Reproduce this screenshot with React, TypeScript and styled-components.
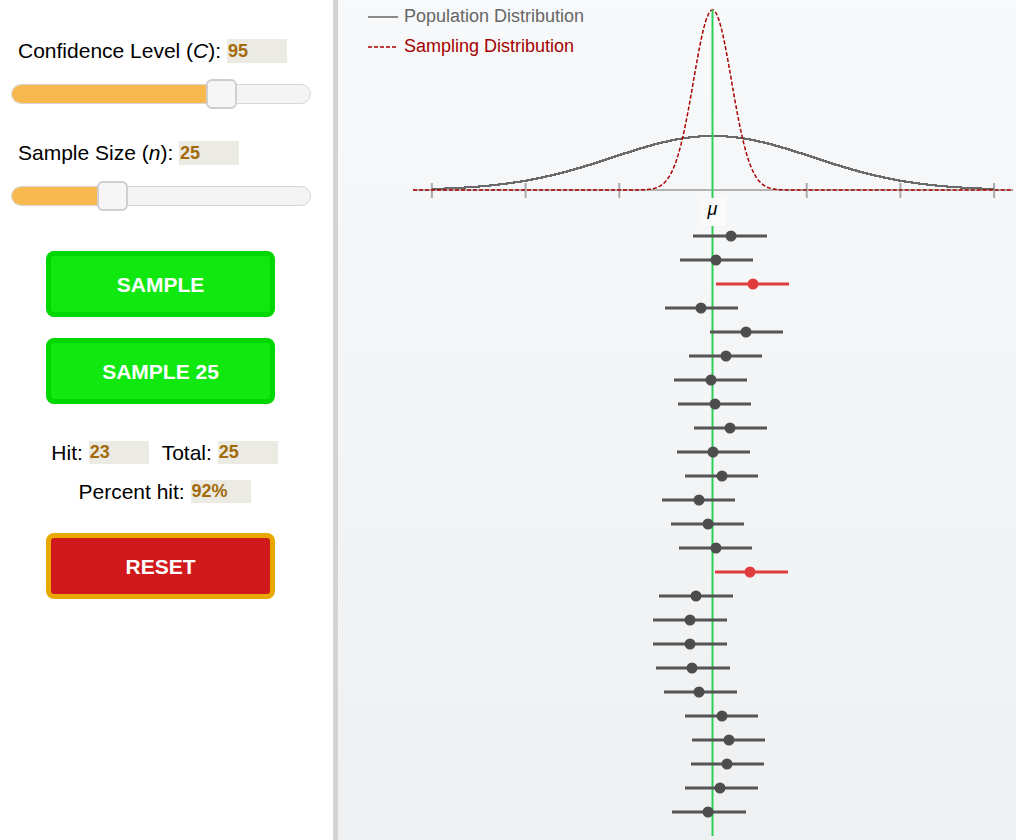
import React from "react";
import styled, { createGlobalStyle } from "styled-components";

const GlobalStyle = createGlobalStyle`
  html, body { margin: 0; padding: 0; }
  body { font-family: "Liberation Sans", Arial, sans-serif; background: #ffffff; }
`;

const Page = styled.div`
  display: flex;
  width: 1016px;
  height: 840px;
  overflow: hidden;
`;

const LeftPanel = styled.div`
  width: 333px;
  flex: none;
  display: flex;
  flex-direction: column;
  background: #ffffff;
  border-right: 5px solid #d3d3d3;
`;

const RightPanel = styled.div`
  flex: 1;
  background: linear-gradient(180deg, #f8f9fb 0%, #eef0f2 100%);
`;

const LabelRow = styled.div<{ $top: number }>`
  display: flex;
  align-items: center;
  margin-top: ${(p) => p.$top}px;
  padding-left: 18px;
  height: 24px;
  font-size: 21px;
  color: #000;
  white-space: pre;
`;

const ValueBox = styled.span<{ $h?: number }>`
  display: inline-block;
  width: 59px;
  height: ${(p) => p.$h ?? 24}px;
  line-height: ${(p) => p.$h ?? 24}px;
  padding-left: 1px;
  background: #ebeae3;
  color: #a36a0c;
  font-weight: bold;
  font-size: 18px;
`;

const SliderWrap = styled.div`
  position: relative;
  margin-left: 11px;
  width: 300px;
  height: 30px;
  display: flex;
  align-items: center;
`;

const Track = styled.div`
  position: relative;
  width: 100%;
  height: 20px;
  box-sizing: border-box;
  border: 1px solid #d6d6d6;
  border-radius: 10px;
  background: #f4f4f4;
  overflow: hidden;
`;

const Fill = styled.div`
  height: 100%;
  background: #f7b84f;
`;

const Thumb = styled.div`
  position: absolute;
  top: 0;
  width: 31px;
  height: 30px;
  box-sizing: border-box;
  border: 2px solid #cfcfcf;
  border-radius: 6px;
  background: #f6f6f6;
`;

const Button = styled.button<{ $top: number; $bg: string; $border: string }>`
  margin-top: ${(p) => p.$top}px;
  margin-left: 46px;
  width: 229px;
  height: 66px;
  box-sizing: border-box;
  border: 5px solid ${(p) => p.$border};
  border-radius: 8px;
  background: ${(p) => p.$bg};
  color: #ffffff;
  font-family: "Liberation Sans", Arial, sans-serif;
  font-weight: bold;
  font-size: 21px;
  padding: 0 0 0 0;
  line-height: 58px;
  cursor: pointer;
`;

const StatsRow = styled.div<{ $top: number }>`
  display: flex;
  justify-content: center;
  align-items: center;
  width: 329px;
  margin-top: ${(p) => p.$top}px;
  height: 23px;
  font-size: 21px;
  white-space: pre;
`;

const Spacer = styled.span`
  display: inline-block;
  width: 13px;
`;

const SliderBlock = styled.div<{ $top: number }>`
  margin-top: ${(p) => p.$top}px;
`;

function Slider({ pct }: { pct: number }) {
  const center = pct * 300;
  return (
    <SliderWrap>
      <Track>
        <Fill style={{ width: `${center}px` }} />
      </Track>
      <Thumb style={{ left: `${center - 15}px` }} />
    </SliderWrap>
  );
}

const Svg = styled.svg`
  display: block;
`;

const CX = 712.5;
const AXIS_Y = 190;

function populationPath(): string {
  let d = "";
  let prevY = -1;
  for (let x = 432; x <= 994; x++) {
    const y = Math.round(AXIS_Y - 54 * Math.exp(-0.5 * Math.pow((x - CX) / 100, 2)));
    if (x === 432) {
      d += `M${x},${y}`;
      prevY = y;
    } else if (y !== prevY) {
      d += ` H${x} V${y}`;
      prevY = y;
    }
  }
  d += ` H994`;
  return d;
}

function samplingPath(): string {
  const pts: string[] = [];
  for (let x = 413; x <= 1013; x += 1) {
    const y = AXIS_Y - 180 * Math.exp(-0.5 * Math.pow((x - CX) / 19, 2));
    pts.push(`${x},${y.toFixed(2)}`);
  }
  return "M" + pts.join(" L");
}

const intervals: { y: number; l: number; r: number; m: number; miss?: boolean }[] = [
  { y: 236, l: 693, r: 767, m: 731 },
  { y: 260, l: 680, r: 753, m: 716 },
  { y: 284, l: 716, r: 789, m: 753, miss: true },
  { y: 308, l: 665, r: 738, m: 701 },
  { y: 332, l: 710, r: 783, m: 746 },
  { y: 356, l: 689, r: 762, m: 726 },
  { y: 380, l: 674, r: 747, m: 711 },
  { y: 404, l: 678, r: 751, m: 715 },
  { y: 428, l: 694, r: 767, m: 730 },
  { y: 452, l: 677, r: 750, m: 713 },
  { y: 476, l: 685, r: 758, m: 722 },
  { y: 500, l: 662, r: 735, m: 699 },
  { y: 524, l: 671, r: 744, m: 708 },
  { y: 548, l: 679, r: 752, m: 716 },
  { y: 572, l: 715, r: 788, m: 750, miss: true },
  { y: 596, l: 659, r: 733, m: 696 },
  { y: 620, l: 653, r: 727, m: 690 },
  { y: 644, l: 653, r: 727, m: 690 },
  { y: 668, l: 656, r: 730, m: 692 },
  { y: 692, l: 664, r: 737, m: 699 },
  { y: 716, l: 685, r: 758, m: 722 },
  { y: 740, l: 692, r: 765, m: 729 },
  { y: 764, l: 691, r: 764, m: 727 },
  { y: 788, l: 685, r: 758, m: 720 },
  { y: 812, l: 672, r: 746, m: 708 },
];

function Chart() {
  const ticks = [-3, -2, -1, 1, 2, 3].map((k) => 713 + k * 93.7);
  return (
    <Svg width={678} height={840} viewBox="338 0 678 840">
      <line x1={368} y1={17} x2={398} y2={17} stroke="#666" strokeWidth={1.5} />
      <text x={404} y={22} fontSize={18} fill="#666" fontFamily="Liberation Sans, Arial, sans-serif">
        Population Distribution
      </text>
      <line x1={368} y1={47} x2={398} y2={47} stroke="#aa0000" strokeWidth={1.5} strokeDasharray="4,2" />
      <text x={404} y={52} fontSize={18} fill="#a50000" fontFamily="Liberation Sans, Arial, sans-serif">
        Sampling Distribution
      </text>

      <line x1={413} y1={AXIS_Y} x2={1013} y2={AXIS_Y} stroke="#b3b3b3" strokeWidth={2} />
      {ticks.map((t) => (
        <line key={t} x1={t} y1={183} x2={t} y2={198} stroke="#aaaaaa" strokeWidth={2} />
      ))}

      <path d={populationPath()} fill="none" stroke="#6a6a6a" strokeWidth={2} />
      <path d={samplingPath()} fill="none" stroke="#aa0000" strokeWidth={1.5} strokeDasharray="4,2" />

      <line x1={CX} y1={10} x2={CX} y2={198} stroke="#2dcf55" strokeWidth={2} />
      <rect x={700} y={198} width={26} height={28} fill="#fbfbfc" />
      <text
        x={CX}
        y={215}
        fontSize={18}
        fontStyle="italic"
        textAnchor="middle"
        fill="#000"
        fontFamily="Liberation Sans, Arial, sans-serif"
      >
        μ
      </text>
      <line x1={CX} y1={226} x2={CX} y2={836} stroke="#2dcf55" strokeWidth={2} />

      {intervals.map((iv) => {
        const c = iv.miss ? "#e03c3e" : "#555555";
        const dc = iv.miss ? "#e03c3e" : "#4d4d4d";
        return (
          <g key={iv.y}>
            <line x1={iv.l} y1={iv.y} x2={iv.r} y2={iv.y} stroke={c} strokeWidth={3} />
            <circle cx={iv.m} cy={iv.y} r={5.5} fill={dc} />
          </g>
        );
      })}
    </Svg>
  );
}

export default function App() {
  return (
    <>
      <GlobalStyle />
      <Page>
        <LeftPanel>
          <LabelRow $top={39}>
            {"Confidence Level ("}
            <i>C</i>
            {"): "}
            <ValueBox>95</ValueBox>
          </LabelRow>
          <SliderBlock $top={16}>
            <Slider pct={0.7} />
          </SliderBlock>
          <LabelRow $top={32}>
            {"Sample Size ("}
            <i>n</i>
            {"): "}
            <ValueBox>25</ValueBox>
          </LabelRow>
          <SliderBlock $top={16}>
            <Slider pct={0.337} />
          </SliderBlock>
          <Button $top={40} $bg="#10e810" $border="#00d600">
            SAMPLE
          </Button>
          <Button $top={21} $bg="#10e810" $border="#00d600">
            SAMPLE 25
          </Button>
          <StatsRow $top={37}>
            {"Hit: "}
            <ValueBox $h={23}>23</ValueBox>
            <Spacer />
            {"Total: "}
            <ValueBox $h={23}>25</ValueBox>
          </StatsRow>
          <StatsRow $top={16}>
            {"Percent hit: "}
            <ValueBox $h={23}>92%</ValueBox>
          </StatsRow>
          <Button $top={30} $bg="#d0191b" $border="#e8a800">
            RESET
          </Button>
        </LeftPanel>
        <RightPanel>
          <Chart />
        </RightPanel>
      </Page>
    </>
  );
}
